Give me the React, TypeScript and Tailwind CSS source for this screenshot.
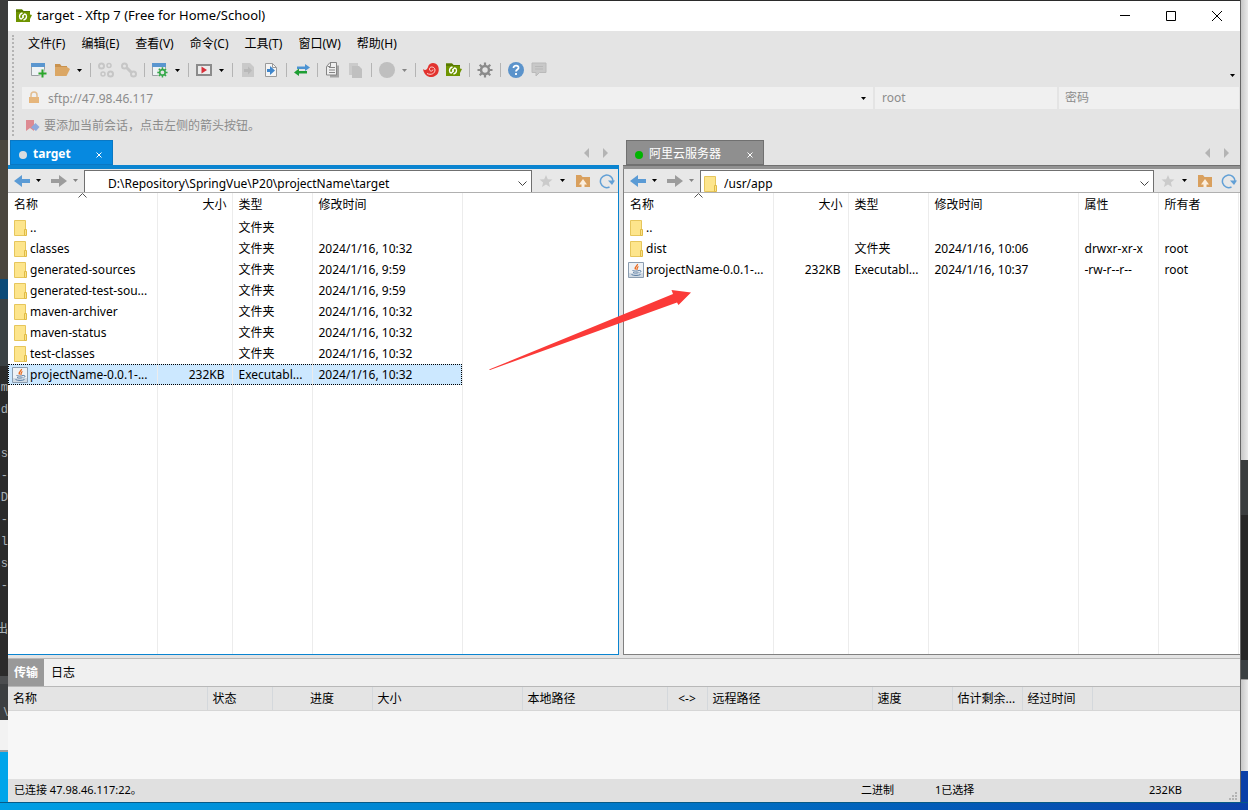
import { Fragment } from 'react';
import type { ReactNode } from 'react';
import clsx from 'clsx';

interface FileItem {
  kind: 'folder' | 'jar';
  cells: string[];
  selected?: boolean;
}

interface FilePaneProps {
  active: boolean;
  title: string;
  path: string;
  columns: string[];
  items: FileItem[];
}

const menus = ['文件(F)', '编辑(E)', '查看(V)', '命令(C)', '工具(T)', '窗口(W)', '帮助(H)'];

const columnWidths = ['w-[149px]', 'w-[75px]', 'w-[80px]', 'w-[150px]', 'w-[80px]', 'w-[80px]'];

const localItems: FileItem[] = [
  { kind: 'folder', cells: ['..', '', '文件夹', ''] },
  { kind: 'folder', cells: ['classes', '', '文件夹', '2024/1/16, 10:32'] },
  { kind: 'folder', cells: ['generated-sources', '', '文件夹', '2024/1/16, 9:59'] },
  { kind: 'folder', cells: ['generated-test-sou...', '', '文件夹', '2024/1/16, 9:59'] },
  { kind: 'folder', cells: ['maven-archiver', '', '文件夹', '2024/1/16, 10:32'] },
  { kind: 'folder', cells: ['maven-status', '', '文件夹', '2024/1/16, 10:32'] },
  { kind: 'folder', cells: ['test-classes', '', '文件夹', '2024/1/16, 10:32'] },
  {
    kind: 'jar',
    cells: ['projectName-0.0.1-...', '232KB', 'Executabl...', '2024/1/16, 10:32'],
    selected: true,
  },
];

const remoteItems: FileItem[] = [
  { kind: 'folder', cells: ['..', '', '', '', '', ''] },
  { kind: 'folder', cells: ['dist', '', '文件夹', '2024/1/16, 10:06', 'drwxr-xr-x', 'root'] },
  {
    kind: 'jar',
    cells: ['projectName-0.0.1-...', '232KB', 'Executabl...', '2024/1/16, 10:37', '-rw-r--r--', 'root'],
  },
];

const transferColumns = [
  { label: '名称', width: 'w-[199px]' },
  { label: '状态', width: 'w-[65px]' },
  { label: '进度', width: 'w-[100px]', center: true },
  { label: '大小', width: 'w-[150px]' },
  { label: '本地路径', width: 'w-[145px]' },
  { label: '<->', width: 'w-[40px]', center: true },
  { label: '远程路径', width: 'w-[165px]' },
  { label: '速度', width: 'w-[80px]' },
  { label: '估计剩余...', width: 'w-[70px]' },
  { label: '经过时间', width: 'w-[70px]' },
];

//icons
function Icon({ children, className }: { children: ReactNode; className?: string }) {
  return (
    <svg viewBox="0 0 16 16" className={clsx('h-4 w-4 shrink-0', className)} fill="none" aria-hidden="true">
      {children}
    </svg>
  );
}

function Caret({ className }: { className?: string }) {
  return (
    <svg viewBox="0 0 5 3" className={clsx('h-[3px] w-[5px] shrink-0', className)} aria-hidden="true">
      <path d="M0 0h5L2.5 3z" fill="currentColor" />
    </svg>
  );
}

function XftpIcon() {
  return (
    <Icon>
      <path d="M0 1.500h6L7.500 3H14v3.500l2 .5-2 4v3H0z" fill="#6e9400" />
      <path d="M0 1.500h6L7.500 3H14v1H0z" fill="#587a00" />
      <path d="M6.500 5C4.500 5.500 3.500 7 3.500 8.500s.7 2.300 1.700 2.500L7 9.500V7" stroke="#fff" strokeWidth="1.300" />
      <path d="M7.500 12c2-.5 3-2 3-3.500S9.800 6.200 8.800 6L7 7.500V10" stroke="#fff" strokeWidth="1.300" />
    </Icon>
  );
}

function WindowBase() {
  return (
    <>
      <path d="M.5 2.500h13v11H.5z" fill="#eef3f5" stroke="#9a9fa3" />
      <path d="M0 1h14v4H0z" fill="#5a96cf" />
    </>
  );
}

function GearPath({ color }: { color: string }) {
  return (
    <>
      <circle cx="8" cy="8" r="4" stroke={color} strokeWidth="2.500" />
      <path
        d="M8 .5v3M8 12.500v3M.5 8h3M12.500 8h3M2.700 2.700l2.100 2.100M11.200 11.200l2.100 2.100M13.300 2.700l-2.100 2.100M4.800 11.200l-2.100 2.100"
        stroke={color}
        strokeWidth="2.200"
      />
    </>
  );
}

function ChainIcon({ broken }: { broken?: boolean }) {
  return (
    <Icon className="text-[#c6c6c6]">
      <circle cx="3.500" cy="4" r="2.500" stroke="currentColor" strokeWidth="2" />
      <circle cx="12.500" cy="12" r="2.500" stroke="currentColor" strokeWidth="2" />
      {broken ? (
        <>
          <circle cx="11" cy="3.500" r="2" stroke="currentColor" strokeWidth="1.500" />
          <circle cx="5" cy="12" r="2" stroke="currentColor" strokeWidth="1.500" />
        </>
      ) : (
        <path d="M5.500 5.500l5 5" stroke="currentColor" strokeWidth="3" />
      )}
    </Icon>
  );
}

function FolderIcon() {
  return (
    <svg viewBox="0 0 14 16" className="h-4 w-3.5 shrink-0" aria-hidden="true">
      <path d="M.5.5h11v15H.5z" fill="#fde58c" stroke="#e6c65c" />
      <path d="M10.500 9.500h2v6h-2z" fill="#fbe28a" stroke="#e0bb45" />
    </svg>
  );
}

function JarIcon() {
  return (
    <Icon>
      <path d="M.5.5h15v15H.5z" fill="#edf1f5" stroke="#8b9db0" />
      <path d="M1 11h14v4H1z" fill="#cfd9e3" />
      <path d="M9.500 2C10 4 6 4.500 7.500 7.500M10.500 4.500C8.500 5.500 9.500 6.500 8.800 8" stroke="#ea6a1f" strokeWidth="1.300" />
      <path d="M4.500 8.500c1.500.8 5 .8 6.500 0M5 10.500c1.500.7 4 .7 5.500 0M3.500 12.500c2 1.300 7 1.300 9 0M11 8.500c2.500-.5 2.500 1.500.5 2.200" stroke="#5a7da3" />
    </Icon>
  );
}

function BackArrow({ forward }: { forward?: boolean }) {
  return (
    <Icon>
      {forward ? (
        <path d="M0 6h8V2l8 6-8 6v-4H0z" fill="#9c9c9c" />
      ) : (
        <path d="M16 6H8V2L0 8l8 6v-4h8z" fill="#5b9bd5" />
      )}
    </Icon>
  );
}

//main toolbar, each inner array is a group between two separators
const toolbar: { label: string; icon: ReactNode; caret?: string }[][] = [
  [
    {
      label: '新建会话',
      icon: (
        <Icon>
          <WindowBase />
          <path d="M11.500 7.500v8M7.500 11.500h8" stroke="#e4e4e4" strokeWidth="4" />
          <path d="M11.500 7.500v8M7.500 11.500h8" stroke="#2ba52b" strokeWidth="2" />
        </Icon>
      ),
    },
    {
      label: '打开',
      icon: (
        <Icon>
          <path d="M1 2h5l1.500 2H13v3H5l-4 7z" fill="#c9924e" />
          <path d="M1 5h12l3 2-3.500 7H1z" fill="#dba765" />
        </Icon>
      ),
      caret: 'text-black',
    },
  ],
  [
    { label: '重新连接', icon: <ChainIcon broken /> },
    { label: '断开', icon: <ChainIcon /> },
  ],
  [
    {
      label: '属性',
      icon: (
        <Icon>
          <WindowBase />
          <circle cx="10.500" cy="10.500" r="5.500" fill="#e4e4e4" />
          <g transform="translate(5 5) scale(.68)">
            <GearPath color="#35a84a" />
          </g>
        </Icon>
      ),
      caret: 'text-black',
    },
  ],
  [
    {
      label: '启动',
      icon: (
        <Icon>
          <path d="M1 3h14v10H1z" fill="#ececec" stroke="#8b8b8b" strokeWidth="2" />
          <path d="M5.500 4.500L11 8l-5.500 3.500z" fill="#d8303a" />
        </Icon>
      ),
      caret: 'text-black',
    },
  ],
  [
    {
      label: '查看文件',
      icon: (
        <Icon>
          <path d="M2 1h8l4 4v10H2z" fill="#c9c9c9" />
          <path d="M4 7h4V4.500L12 8.500l-4 4V10H4z" fill="#b8b8b8" />
        </Icon>
      ),
    },
    {
      label: '传输文件',
      icon: (
        <Icon>
          <path d="M2.500 1.500h7l4 4v9h-11z" fill="#f4f4f4" stroke="#9a9a9a" />
          <path d="M9.500 1.500v4h4" stroke="#9a9a9a" />
          <path d="M4 7h3V4l5 4.500L7 13v-3H4z" fill="#3f86cc" />
        </Icon>
      ),
    },
  ],
  [
    {
      label: '同步',
      icon: (
        <Icon>
          <path d="M3 4.500h8V2l5 3.500L11 9V7H3z" fill="#4c93d3" />
          <path d="M13 9H5V6.500L0 10.500 5 14v-2.500h8z" fill="#1f9e34" />
        </Icon>
      ),
    },
  ],
  [
    {
      label: '复制',
      icon: (
        <Icon>
          <path d="M5 3.500h9v12H5z" fill="#a5a5a5" />
          <path d="M1.500 4.500l3.500-4h6.500V13h-10z" fill="#efefef" stroke="#858585" />
          <path d="M4 5.500h6M4 8h6M4 10.500h6M5.500 1v3.500H2.500" stroke="#858585" />
        </Icon>
      ),
    },
    {
      label: '粘贴',
      icon: (
        <Icon>
          <path d="M1 1h9v12H1z" fill="#cbcbcb" />
          <path d="M4 4h7l3 3v9H4z" fill="#c0c0c0" />
        </Icon>
      ),
    },
  ],
  [
    {
      label: '停止',
      icon: (
        <Icon>
          <circle cx="8" cy="8" r="8" fill="#bfbfbf" />
        </Icon>
      ),
      caret: 'text-[#858585]',
    },
  ],
  [
    {
      label: 'Xshell',
      icon: (
        <Icon>
          <path d="M0 7c2 2 4 1 5-2 1-5 8-5 10-1 2 5 0 10-6 11-4 .5-8-2-9-8z" fill="#e2332f" />
          <path d="M4 11.500c4 2 8 0 8-3.500s-5.500-4-5.500-1 3.500 2.500 3.500.5" stroke="#ffd8d4" />
        </Icon>
      ),
    },
    { label: 'Xftp', icon: <XftpIcon /> },
  ],
  [
    {
      label: '选项',
      icon: (
        <Icon>
          <GearPath color="#8b8b8b" />
        </Icon>
      ),
    },
  ],
  [
    {
      label: '帮助',
      icon: (
        <Icon>
          <circle cx="8" cy="8" r="8" fill="#5b93cb" />
          <path d="M5.500 6c0-3.500 5.500-3 5 0C10.200 7.500 8 7.500 8 9.500M8 11v2" stroke="#fff" strokeWidth="1.800" />
        </Icon>
      ),
    },
    {
      label: '反馈',
      icon: (
        <Icon>
          <path d="M1 1h14v9.500H8.500L5 14v-3.500H1z" fill="#c8c8c8" stroke="#bababa" />
          <path d="M4 4.500h8M4 7h8" stroke="#b8b8b8" />
        </Icon>
      ),
    },
  ],
];

function TitleBar() {
  return (
    <header className="flex h-[30px] items-center bg-white pl-2">
      <XftpIcon />
      <h1 className="ml-[5px] flex-1 text-[13px]">target - Xftp 7 (Free for Home/School)</h1>
      <button type="button" aria-label="最小化" className="flex h-full w-[46px] items-center justify-center">
        <svg viewBox="0 0 10 10" className="h-2.5 w-2.5" stroke="#000">
          <path d="M0 4.500h10" />
        </svg>
      </button>
      <button type="button" aria-label="最大化" className="flex h-full w-[46px] items-center justify-center">
        <svg viewBox="0 0 10 10" className="h-2.5 w-2.5" stroke="#000" fill="none">
          <path d="M.5.5h9v9h-9z" />
        </svg>
      </button>
      <button type="button" aria-label="关闭" className="flex h-full w-[46px] items-center justify-center">
        <svg viewBox="0 0 10 10" className="h-2.5 w-2.5" stroke="#000">
          <path d="M0 0l10 10M10 0L0 10" />
        </svg>
      </button>
    </header>
  );
}

function CommandArea() {
  return (
    <div className="flex h-[109px] bg-[#e4e4e4]">
      <div className="my-1 ml-1 w-0.5 border-l-2 border-dotted border-[#b4b4b4]" />
      <div className="min-w-0 flex-1">
        <nav className="flex h-[26px] items-center gap-4 pl-3.5">
          {menus.map((menu) => (
            <button key={menu} type="button">
              {menu}
            </button>
          ))}
        </nav>
        <div className="flex h-[26px] items-center pl-[13px]">
          {toolbar.map((group, index) => (
            <Fragment key={index}>
              {index > 0 && (
                <div className="flex w-2 justify-center">
                  <div className="h-3.5 w-px bg-[#b4b4b4]" />
                </div>
              )}
              {group.map((tool) => (
                <Fragment key={tool.label}>
                  <button type="button" aria-label={tool.label} className="flex w-[23px] justify-center">
                    {tool.icon}
                  </button>
                  {tool.caret && (
                    <button
                      type="button"
                      aria-label={`${tool.label}选项`}
                      className={clsx('flex w-[13px] justify-center', tool.caret)}
                    >
                      <Caret />
                    </button>
                  )}
                </Fragment>
              ))}
            </Fragment>
          ))}
          <button type="button" aria-label="更多" className="mt-2.5 mr-[5px] ml-auto">
            <Caret />
          </button>
        </div>
        <div className="mt-1 flex h-[22px] gap-0.5 pr-px pl-2 text-[#8c8c8c]">
          <div className="flex min-w-0 flex-1 items-center bg-[#f0f0f0] pr-[7px] pl-1">
            <Icon>
              <path d="M5 7V5a3 3 0 0 1 6 0v2" stroke="#e2bd90" strokeWidth="1.500" />
              <path d="M3 7h10v6H3z" fill="#e6b67c" />
            </Icon>
            <input
              aria-label="地址"
              defaultValue="sftp://47.98.46.117"
              className="ml-1.5 h-full min-w-0 flex-1 bg-transparent outline-none"
            />
            <button type="button" aria-label="历史地址" className="text-black">
              <Caret />
            </button>
          </div>
          <input
            aria-label="用户名"
            defaultValue="root"
            className="w-[182px] bg-[#f0f0f0] px-[7px] outline-none"
          />
          <input
            aria-label="密码"
            type="password"
            placeholder="密码"
            className="w-[180px] bg-[#f0f0f0] px-1.5 outline-none placeholder:text-[#8c8c8c]"
          />
        </div>
        <div className="mt-[5px] flex h-6 items-center gap-[3px] pl-[11px] text-[#8c8c8c]">
          <Icon>
            <path d="M1 2h8v11l-4-3-4 3z" fill="#dd8a92" />
            <path d="M6 9.500L10.500 5 14.500 9 11 13z" fill="#8ea9dc" />
          </Icon>
          <p>要添加当前会话，点击左侧的箭头按钮。</p>
        </div>
      </div>
    </div>
  );
}

function FilePane({ active, title, path, columns, items }: FilePaneProps) {
  return (
    <section className="flex min-w-0 flex-col">
      <div className="flex h-[25px] bg-[#e4e4e4]">
        <div
          className={clsx(
            'flex items-center border text-white',
            active
              ? 'ml-0.5 w-[103px] border-[#0a78c4] bg-[#0689e0] font-bold'
              : 'ml-[3px] w-[138px] border-[#707070] bg-[#8f8f8f]'
          )}
        >
          <span className={clsx('mt-1 ml-2 h-2 w-2 rounded-full', active ? 'bg-[#d9dde0]' : 'bg-[#00b400]')} />
          <button type="button" className="ml-1.5 flex-1 pt-0.5 text-left">
            {title}
          </button>
          <button type="button" aria-label="关闭标签" className="mt-1 mr-2.5">
            <svg viewBox="0 0 6 6" className="h-1.5 w-1.5" stroke="#fff" aria-hidden="true">
              <path d="M.5.5l5 5M5.500.5l-5 5" />
            </svg>
          </button>
        </div>
        <div className="mr-[11px] ml-auto flex items-center gap-3.5 text-[#b4b4b4]">
          <button type="button" aria-label="上一个标签">
            <svg viewBox="0 0 5 10" className="h-2.5 w-[5px]" aria-hidden="true">
              <path d="M5 0v10L0 5z" fill="currentColor" />
            </svg>
          </button>
          <button type="button" aria-label="下一个标签">
            <svg viewBox="0 0 5 10" className="h-2.5 w-[5px]" aria-hidden="true">
              <path d="M0 0v10l5-5z" fill="currentColor" />
            </svg>
          </button>
        </div>
      </div>
      <div className={clsx('h-1', active ? 'bg-[#0a84d0]' : 'border-t border-[#707070] bg-[#929292]')} />
      <div
        className={clsx(
          'flex flex-1 flex-col border-b bg-white',
          active ? 'border-r border-[#0a84d0]' : 'border-l border-[#808080]'
        )}
      >
        <div className="flex h-6 items-center border-b border-[#b0b0b0] bg-[#e8e8e8]">
          <button type="button" aria-label="后退" className="ml-1.5">
            <BackArrow />
          </button>
          <button type="button" aria-label="后退历史" className="ml-1.5">
            <Caret />
          </button>
          <button type="button" aria-label="前进" className="ml-2.5">
            <BackArrow forward />
          </button>
          <button type="button" aria-label="前进历史" className="mr-1.5 ml-1.5 text-[#858585]">
            <Caret />
          </button>
          <div className="mt-px flex h-[22px] min-w-0 flex-1 items-center border border-b-0 border-[#707070] bg-white pt-1 pr-1 pl-[3px]">
            <span className="w-3.5 shrink-0">{!active && <FolderIcon />}</span>
            <input
              aria-label="路径"
              defaultValue={path}
              className="ml-1.5 h-full min-w-0 flex-1 bg-transparent outline-none"
            />
            <button type="button" aria-label="路径历史">
              <svg viewBox="0 0 9 5" className="h-[5px] w-[9px]" fill="none" stroke="#444" aria-hidden="true">
                <path d="M.5.5l4 4 4-4" />
              </svg>
            </button>
          </div>
          <button type="button" aria-label="收藏" className="ml-1.5">
            <Icon>
              <path d="M8 2l1.800 4.200 4.700.4-3.600 3 1.100 4.400-4-2.400-4 2.400 1.100-4.400-3.600-3 4.700-.4z" fill="#cbcbcb" />
            </Icon>
          </button>
          <button type="button" aria-label="收藏列表" className="ml-1.5">
            <Caret />
          </button>
          <button type="button" aria-label="上级目录" className="ml-2.5">
            <Icon>
              <path d="M1 2h5l1.500 2H15v10H1z" fill="#d9a05e" />
              <path d="M4 11.500L8 6l4 5.500H9.500V14h-3v-2.500z" fill="#fbeedd" />
            </Icon>
          </button>
          <button type="button" aria-label="刷新" className="mr-[3px] ml-2">
            <Icon>
              <path d="M10.500 14A6.300 6.300 0 1 1 14 8" stroke="#62a0d6" strokeWidth="1.500" />
              <path d="M9 7.500h7l-3 4.500z" fill="#62a0d6" />
            </Icon>
          </button>
        </div>
        <div className="flex flex-1">
          <table className={clsx('table-fixed text-left', active ? 'w-[454px]' : 'w-[614px]')}>
            <thead>
              <tr className="h-6">
                {columns.map((column, index) => (
                  <th
                    key={column}
                    className={clsx(
                      'relative border-r border-[#ececec] px-1.5 font-normal',
                      columnWidths[index],
                      index === 1 && 'pr-[5px] text-right'
                    )}
                  >
                    {index === 0 && (
                      <svg
                        viewBox="0 0 9 5"
                        className="absolute inset-x-0 top-0 mx-auto h-[5px] w-[9px]"
                        fill="none"
                        stroke="#555"
                        aria-hidden="true"
                      >
                        <path d="M.5 4.500l4-4 4 4" />
                      </svg>
                    )}
                    {column}
                  </th>
                ))}
              </tr>
            </thead>
            <tbody>
              {items.map((item) => (
                <tr
                  key={item.cells[0]}
                  className={clsx(
                    'h-[21px]',
                    item.selected && 'bg-[#cce8ff] outline-1 -outline-offset-1 outline-black outline-dotted'
                  )}
                >
                  {item.cells.map((cell, index) => (
                    <td
                      key={index}
                      className={clsx(
                        'border-r border-[#ececec] whitespace-nowrap',
                        index === 1 && 'pr-[7px] text-right',
                        index === 0 && (item.kind === 'jar' ? 'pl-1' : 'pl-1.5'),
                        index > 1 && 'pl-1.5'
                      )}
                    >
                      {index === 0 ? (
                        <span className="flex items-center gap-0.5">
                          {item.kind === 'jar' ? <JarIcon /> : <FolderIcon />}
                          {cell}
                        </span>
                      ) : (
                        cell
                      )}
                    </td>
                  ))}
                </tr>
              ))}
              <tr className="h-full">
                {columns.map((column) => (
                  <td key={column} className="border-r border-[#ececec]" />
                ))}
              </tr>
            </tbody>
          </table>
        </div>
      </div>
    </section>
  );
}

function TransferPanel() {
  return (
    <section className="mt-[3px] flex flex-col border-t border-[#b8b8b8] bg-[#f7f7f7]">
      <div className="flex h-7 border-b border-[#b8b8b8] bg-[#f0f0f0]">
        <button type="button" className="w-9 bg-[#999] font-bold text-white">
          传输
        </button>
        <button type="button" className="px-[7px]">
          日志
        </button>
      </div>
      <div className="h-[92px] overflow-hidden">
        <div className="border-b border-[#d6d6d6] bg-[#e4e4e4]">
          <table className="w-[1084px] table-fixed text-left">
            <thead>
              <tr className="h-[23px]">
                {transferColumns.map((column) => (
                  <th
                    key={column.label}
                    className={clsx(
                      'border-r border-[#d4d8dc] px-[5px] font-normal whitespace-nowrap',
                      column.width,
                      column.center && 'text-center'
                    )}
                  >
                    {column.label}
                  </th>
                ))}
              </tr>
            </thead>
          </table>
        </div>
      </div>
    </section>
  );
}

function StatusBar() {
  return (
    <footer className="flex h-[23px] items-center bg-[#e0e0e0] pl-1.5 text-[11px]">
      <span className="flex-1">已连接 47.98.46.117:22。</span>
      <span className="w-[74px]">二进制</span>
      <span className="w-[214px]">1已选择</span>
      <span className="w-20">232KB</span>
      <svg viewBox="0 0 8 8" className="mr-[3px] mb-0.5 h-2 w-2 self-end" fill="#b4b4b4" aria-hidden="true">
        <path d="M6 0h2v2H6zM6 3h2v2H6zM3 3h2v2H3zM6 6h2v2H6zM3 6h2v2H3zM0 6h2v2H0z" />
      </svg>
    </footer>
  );
}

//other windows showing behind the left edge
function LeftBackdrop() {
  return (
    <div className="flex w-2 flex-col overflow-hidden bg-[#00a5ea]">
      <div className="h-[140px] bg-[#3b3c3c]" />
      <div className="h-[139px] bg-[#4a463f]" />
      <div className="h-5 bg-[#0b4a78]" />
      <div className="h-[67px] bg-[#3a4144]" />
      <div className="h-[310px] bg-[#2b2b2b] pt-[11px] text-right font-['Liberation_Mono','Noto_Sans_CJK_SC',monospace] text-[#a9b1b6]">
        {['m', 'd', '', 's', '-', 'D', '-', 'l', 's', '-', '', '出'].map((char, index) => (
          <div key={index} className="flex h-[22px] items-center justify-end">
            {char}
          </div>
        ))}
      </div>
      <div className="flex h-11 items-end justify-end border-t-8 border-[#4b4d4f] bg-[#3c3f41] text-[#a9b1b6]">\</div>
      <div className="h-8 border-b-2 border-[#a0a0a0] bg-[#f2f2f2]" />
    </div>
  );
}

function RightBackdrop() {
  return (
    <div className="flex w-2 flex-col border-l border-[#666] bg-[#0a3fa8]">
      <div className="h-[460px] bg-linear-to-r from-[#c8c8c8] to-[#eaeaea]" />
      <div className="h-[55px] bg-[#3a3d3e]" />
      <div className="h-[145px] bg-[#262626]" />
      <div className="h-[19px] bg-[#3a3f41]" />
      <div className="h-[92px] border-t border-[#999] bg-linear-to-r from-[#c8c8c8] to-[#eaeaea]" />
    </div>
  );
}

export default function App() {
  return (
    <div className="flex min-h-screen flex-col bg-[#2b2b2b] font-['Noto_Sans','Noto_Sans_CJK_SC',sans-serif] text-xs text-black">
      <div className="flex flex-1">
        <LeftBackdrop />
        <main className="mt-px flex min-w-0 flex-1 flex-col bg-[#e4e4e4]">
          <TitleBar />
          <CommandArea />
          <div className="relative grid flex-1 grid-cols-[611fr_617fr] gap-1">
            <FilePane
              active
              title="target"
              path="D:\Repository\SpringVue\P20\projectName\target"
              columns={['名称', '大小', '类型', '修改时间']}
              items={localItems}
            />
            <FilePane
              active={false}
              title="阿里云服务器"
              path="/usr/app"
              columns={['名称', '大小', '类型', '修改时间', '属性', '所有者']}
              items={remoteItems}
            />
            <svg
              viewBox="0 0 202 80"
              className="pointer-events-none absolute top-[150px] left-[481px] h-20 w-[202px]"
              aria-hidden="true"
            >
              <path d="M0 79.500L184 4l-1.500-4L202 2.500 189.500 15l-1.500-2.500L1 80z" fill="#fb3a38" />
            </svg>
          </div>
          <TransferPanel />
          <StatusBar />
        </main>
        <RightBackdrop />
      </div>
      <div className="h-2 border-t border-[#075a86] bg-linear-to-r from-[#009fe4] via-[#0078c8] to-[#0a3fa8]" />
    </div>
  );
}
